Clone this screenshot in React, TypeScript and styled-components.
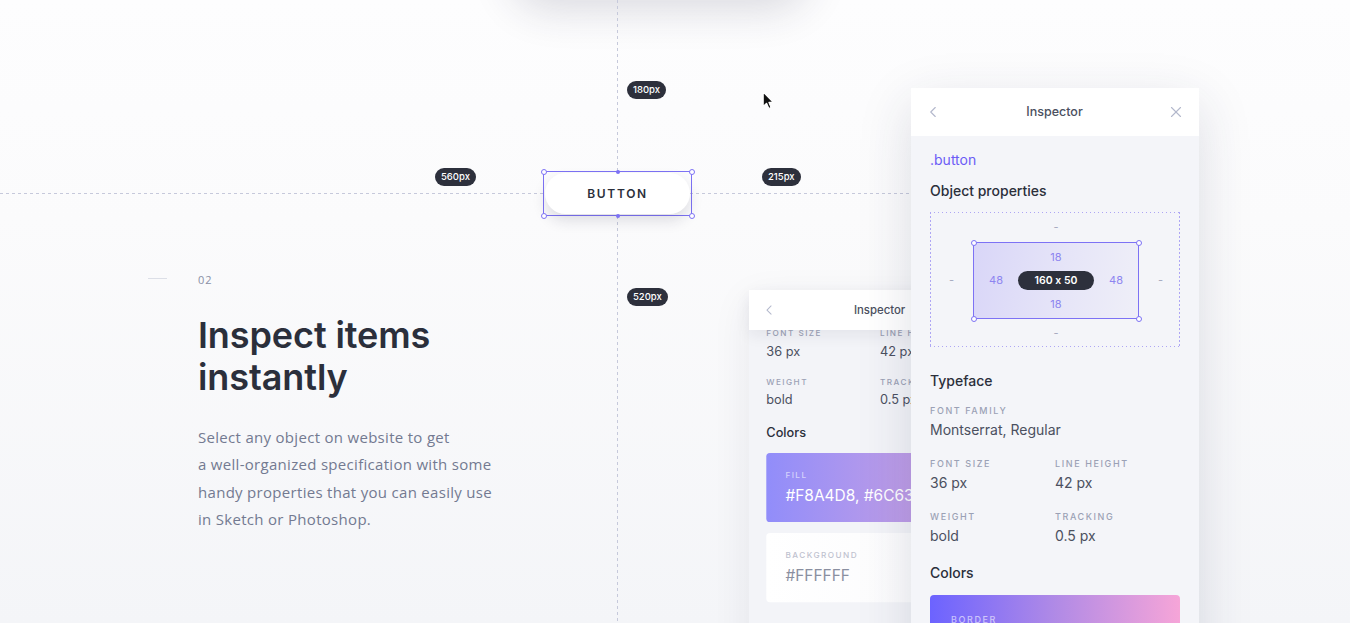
import React from "react";
import styled, { createGlobalStyle, css } from "styled-components";
import { ChevronLeft, X } from "lucide-react";

const UI = `"Inter", "Noto Sans", sans-serif`;

const GlobalStyle = createGlobalStyle`
  html, body { margin: 0; padding: 0; }
  body { font-family: "Open Sans", sans-serif; background: #fbfbfd; }
  * { box-sizing: border-box; }
`;

const Page = styled.main`
  position: relative;
  width: 100%;
  height: 623px;
  overflow: hidden;
  background: linear-gradient(180deg, #fdfdfe 0%, #fbfbfc 35%, #f4f5f8 100%);
`;

/* ---------- intro copy ---------- */
const Intro = styled.section`
  display: flex;
  align-items: flex-start;
  padding: 270px 0 0 148px;
`;
const Dash = styled.span`
  flex: none;
  width: 19px;
  height: 1px;
  margin: 8px 31px 0 0;
  background: #dcdfe7;
`;
const Copy = styled.div`
  display: flex;
  flex-direction: column;
`;
const Eyebrow = styled.span`
  font: 400 11px/20px "Open Sans", sans-serif;
  letter-spacing: 1px;
  color: #8990a6;
`;
const Heading = styled.h2`
  margin: 24px 0 0;
  font: 600 36px/42px ${UI};
  letter-spacing: -0.1px;
  color: #2b2f3b;
`;
const Lead = styled.p`
  margin: 26px 0 0;
  font: 400 15px/27.3px "Open Sans", sans-serif;
  letter-spacing: 0.3px;
  color: #737a91;
`;

/* ---------- canvas ---------- */
const Canvas = styled.div`
  position: absolute;
  inset: 0;
  pointer-events: none;
`;
const TopShadow = styled.div`
  position: absolute;
  left: 510px;
  top: -92px;
  width: 300px;
  height: 86px;
  border-radius: 40px;
  background: #fff;
  box-shadow: 0 16px 42px rgba(40, 40, 70, 0.16);
`;
const VGuide = styled.div`
  position: absolute;
  left: 617px;
  top: 0;
  bottom: 0;
  width: 1px;
  background: repeating-linear-gradient(180deg, #c6c9db 0 3px, transparent 3px 6px);
`;
const HGuide = styled.div`
  position: absolute;
  left: 0;
  top: 193px;
  width: 911px;
  height: 1px;
  background: repeating-linear-gradient(90deg, #c6c9db 0 3px, transparent 3px 6px);
`;
const Badge = styled.span<{ $x: number; $y: number }>`
  position: absolute;
  left: ${(p) => p.$x}px;
  top: ${(p) => p.$y}px;
  height: 18px;
  padding: 0 6px;
  border-radius: 9px;
  background: #2d303c;
  color: #fff;
  font: 500 9.5px/18px ${UI};
`;
const Selection = styled.div`
  position: absolute;
  left: 543px;
  top: 171px;
  width: 149px;
  height: 45px;
  border: 1px solid #7d72f5;
  display: flex;
  padding: 1px;
`;
const DemoButton = styled.div`
  flex: 1;
  display: flex;
  align-items: center;
  justify-content: center;
  border-radius: 21px;
  background: #fff;
  box-shadow: 0 7px 14px rgba(30, 30, 60, 0.13);
  font: 600 12px/1 ${UI};
  letter-spacing: 1.7px;
  color: #2b2f3b;
`;
type HandlePos = "tl" | "tr" | "bl" | "br" | "tm" | "bm";
const Handle = styled.span<{ $pos: HandlePos }>`
  position: absolute;
  z-index: 2;
  border-radius: 50%;
  ${(p) =>
    p.$pos === "tm" || p.$pos === "bm"
      ? css`
          width: 4px;
          height: 4px;
          background: #7d72f5;
          left: calc(50% - 2px);
        `
      : css`
          width: 6px;
          height: 6px;
          background: #fff;
          border: 1px solid #7d72f5;
        `}
  ${(p) => (p.$pos === "tl" || p.$pos === "bl" ? "left: -3.5px;" : "")}
  ${(p) => (p.$pos === "tr" || p.$pos === "br" ? "right: -3.5px;" : "")}
  ${(p) => (p.$pos === "tl" || p.$pos === "tr" ? "top: -3.5px;" : "")}
  ${(p) => (p.$pos === "bl" || p.$pos === "br" ? "bottom: -3.5px;" : "")}
  ${(p) => (p.$pos === "tm" ? "top: -2.5px;" : "")}
  ${(p) => (p.$pos === "bm" ? "bottom: -2.5px;" : "")}
`;
const Cursor = styled.svg`
  position: absolute;
  left: 762px;
  top: 91px;
`;

/* ---------- inspector panels ---------- */
const Panel = styled.aside<{ $x: number; $y: number; $scale: number; $back?: boolean }>`
  position: absolute;
  left: ${(p) => p.$x}px;
  top: ${(p) => p.$y}px;
  width: 288px;
  height: 620px;
  transform: scale(${(p) => p.$scale});
  transform-origin: 0 0;
  display: flex;
  flex-direction: column;
  background: ${(p) => (p.$back ? "#f3f4f8" : "#f4f5f9")};
  box-shadow: ${(p) =>
    p.$back ? "0 12px 40px rgba(40, 44, 80, 0.08)" : "0 16px 50px rgba(40, 44, 80, 0.15)"};
`;
const PanelHeader = styled.header<{ $compact?: boolean }>`
  position: relative;
  z-index: 1;
  flex: none;
  height: ${(p) => (p.$compact ? 44 : 48)}px;
  display: grid;
  grid-template-columns: 1fr auto 1fr;
  align-items: center;
  padding: 0 14px 0 13px;
  background: #fff;
  color: #b3b8cc;
  box-shadow: ${(p) => (p.$compact ? "0 6px 16px rgba(30, 30, 60, 0.07)" : "none")};
  & > svg:last-child {
    justify-self: end;
  }
`;
const PanelTitle = styled.span`
  font: 500 12.5px/1 ${UI};
  color: #4b5060;
`;
const PanelBody = styled.div<{ $flush?: boolean }>`
  display: flex;
  flex-direction: column;
  padding: ${(p) => (p.$flush ? "0 19px" : "14px 19px 0")};
`;
const ClassName = styled.span`
  font: 400 14px/20px ${UI};
  color: #6b5cf6;
`;
const SectionTitle = styled.h3<{ $gap: number }>`
  margin: ${(p) => p.$gap}px 0 0;
  font: 500 14px/20px ${UI};
  color: #2b2f3b;
`;
const BoxModel = styled.div`
  margin-top: 11px;
  height: 135px;
  display: grid;
  grid-template-columns: 43px 1fr 43px;
  grid-template-rows: 30px 1fr 29px;
  place-items: center;
  background:
    repeating-linear-gradient(90deg, #aea6f4 0 1.5px, transparent 1.5px 4px) top / 100% 1px no-repeat,
    repeating-linear-gradient(90deg, #aea6f4 0 1.5px, transparent 1.5px 4px) bottom / 100% 1px no-repeat,
    repeating-linear-gradient(180deg, #aea6f4 0 1.5px, transparent 1.5px 4px) left / 1px 100% no-repeat,
    repeating-linear-gradient(180deg, #aea6f4 0 1.5px, transparent 1.5px 4px) right / 1px 100% no-repeat;
`;
const Cell = styled.span<{ $col: number; $row: number }>`
  grid-column: ${(p) => p.$col};
  grid-row: ${(p) => p.$row};
  font: 400 11px/1 ${UI};
  color: #a6aabf;
`;
const InnerBox = styled.div`
  grid-column: 2;
  grid-row: 2;
  position: relative;
  width: 100%;
  height: 100%;
  display: grid;
  grid-template-columns: 44px 1fr 44px;
  grid-template-rows: 28px 1fr 28px;
  place-items: center;
  border: 1px solid #7d72f5;
  background: linear-gradient(100deg, #d9d6f8 0%, #e6e5f8 55%, #efeff8 100%);
`;
const Metric = styled.span<{ $col: number; $row: number }>`
  grid-column: ${(p) => p.$col};
  grid-row: ${(p) => p.$row};
  font: 400 11px/1 ${UI};
  color: #8d84f0;
`;
const SizePill = styled.span`
  grid-column: 2;
  grid-row: 2;
  width: 76px;
  height: 19px;
  border-radius: 10px;
  background: #2d303c;
  color: #fff;
  font: 600 10.5px/19px ${UI};
  font-feature-settings: "calt" 0;
  text-align: center;
`;
const FamilyField = styled.div`
  margin-top: 14px;
  margin-bottom: 18px;
`;
const PropGrid = styled.div<{ $offset?: number }>`
  margin-top: ${(p) => p.$offset ?? 0}px;
  display: grid;
  grid-template-columns: 125px 1fr;
  row-gap: 18px;
`;
const Label = styled.div<{ $tone?: "light" | "muted" | "plain" }>`
  font: 500 9px/12px ${UI};
  letter-spacing: 1.6px;
  text-transform: uppercase;
  color: ${(p) =>
    p.$tone === "light" ? "rgba(255,255,255,0.6)" : p.$tone === "muted" ? "#bfc2cf" : "#9ba1b5"};
`;
const Value = styled.div`
  margin-top: 3px;
  font: 400 14px/20px ${UI};
  color: #4b5060;
  white-space: nowrap;
`;
type Swatch = "fill" | "border" | "plain";
const ColorCard = styled.div<{ $variant: Swatch; $gap: number }>`
  flex: none;
  margin-top: ${(p) => p.$gap}px;
  height: 76px;
  padding: 19px 21px;
  border-radius: 4px;
  background: ${(p) =>
    p.$variant === "fill"
      ? "linear-gradient(90deg, #918dfa 0%, #b99be9 55%, #d4a4de 100%)"
      : p.$variant === "border"
      ? "linear-gradient(90deg, #6c63ff 0%, #b08ae6 50%, #f6a5d8 100%)"
      : "linear-gradient(90deg, #ffffff 0%, #fafafc 100%)"};
`;
const ColorValue = styled.div<{ $dark?: boolean }>`
  margin-top: 6px;
  font: 400 17px/20px ${UI};
  color: ${(p) => (p.$dark ? "#8a8fa0" : "#ffffff")};
  white-space: nowrap;
`;

const Field = ({ label, value }: { label: string; value: string }) => (
  <div>
    <Label>{label}</Label>
    <Value>{value}</Value>
  </div>
);

const Header = ({ compact }: { compact?: boolean }) => (
  <PanelHeader $compact={compact}>
    <ChevronLeft size={18} strokeWidth={1.5} />
    <PanelTitle>Inspector</PanelTitle>
    <X size={18} strokeWidth={1.5} />
  </PanelHeader>
);

export default function App() {
  return (
    <Page>
      <GlobalStyle />
      <Intro>
        <Dash />
        <Copy>
          <Eyebrow>02</Eyebrow>
          <Heading>
            Inspect items
            <br />
            instantly
          </Heading>
          <Lead>
            Select any object on website to get
            <br />
            a well-organized specification with some
            <br />
            handy properties that you can easily use
            <br />
            in Sketch or Photoshop.
          </Lead>
        </Copy>
      </Intro>

      <Canvas>
        <TopShadow />
        <VGuide />
        <HGuide />
        <Badge $x={627} $y={81}>180px</Badge>
        <Badge $x={435} $y={168}>560px</Badge>
        <Badge $x={762} $y={168}>215px</Badge>
        <Badge $x={627} $y={288}>520px</Badge>
        <Selection>
          <Handle $pos="tl" />
          <Handle $pos="tr" />
          <Handle $pos="bl" />
          <Handle $pos="br" />
          <Handle $pos="tm" />
          <Handle $pos="bm" />
          <DemoButton>BUTTON</DemoButton>
        </Selection>
        <Cursor width="13" height="19" viewBox="0 0 12 18">
          <path
            d="M1 1 L1 14.5 L4.2 11.6 L6.4 16.6 L8.4 15.7 L6.3 10.8 L10.5 10.8 Z"
            fill="#111"
            stroke="#fff"
            strokeWidth="1"
            strokeLinejoin="round"
          />
        </Cursor>

        <Panel $x={749} $y={290} $scale={0.91} $back>
          <Header compact />
          <PanelBody $flush>
            <PropGrid $offset={-2}>
              <Field label="Font size" value="36 px" />
              <Field label="Line height" value="42 px" />
              <Field label="Weight" value="bold" />
              <Field label="Tracking" value="0.5 px" />
            </PropGrid>
            <SectionTitle $gap={17}>Colors</SectionTitle>
            <ColorCard $variant="fill" $gap={12}>
              <Label $tone="light">Fill</Label>
              <ColorValue>#F8A4D8, #6C63FF</ColorValue>
            </ColorCard>
            <ColorCard $variant="plain" $gap={12}>
              <Label $tone="muted">Background</Label>
              <ColorValue $dark>#FFFFFF</ColorValue>
            </ColorCard>
          </PanelBody>
        </Panel>

        <Panel $x={911} $y={88} $scale={1}>
          <Header />
          <PanelBody>
            <ClassName>.button</ClassName>
            <SectionTitle $gap={11}>Object properties</SectionTitle>
            <BoxModel>
              <Cell $col={2} $row={1}>-</Cell>
              <Cell $col={1} $row={2}>-</Cell>
              <InnerBox>
                <Handle $pos="tl" />
                <Handle $pos="tr" />
                <Handle $pos="bl" />
                <Handle $pos="br" />
                <Metric $col={2} $row={1}>18</Metric>
                <Metric $col={1} $row={2}>48</Metric>
                <SizePill>160 x 50</SizePill>
                <Metric $col={3} $row={2}>48</Metric>
                <Metric $col={2} $row={3}>18</Metric>
              </InnerBox>
              <Cell $col={3} $row={2}>-</Cell>
              <Cell $col={2} $row={3}>-</Cell>
            </BoxModel>
            <SectionTitle $gap={24}>Typeface</SectionTitle>
            <FamilyField>
              <Field label="Font family" value="Montserrat, Regular" />
            </FamilyField>
            <PropGrid>
              <Field label="Font size" value="36 px" />
              <Field label="Line height" value="42 px" />
              <Field label="Weight" value="bold" />
              <Field label="Tracking" value="0.5 px" />
            </PropGrid>
            <SectionTitle $gap={17}>Colors</SectionTitle>
            <ColorCard $variant="border" $gap={12}>
              <Label $tone="light">Border</Label>
            </ColorCard>
          </PanelBody>
        </Panel>
      </Canvas>
    </Page>
  );
}
